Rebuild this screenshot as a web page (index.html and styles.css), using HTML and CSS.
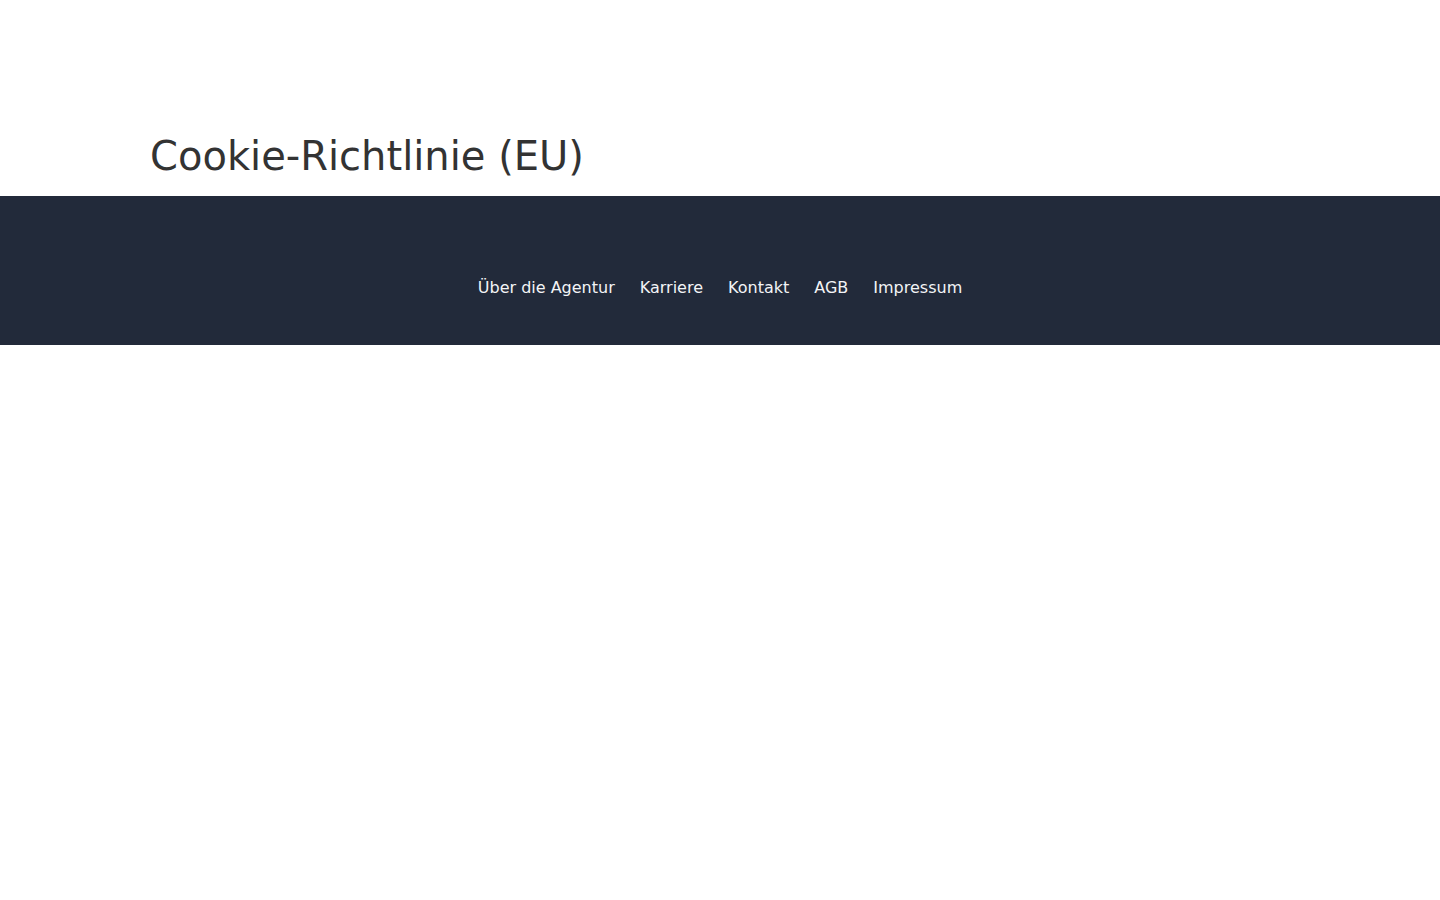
FILE: index.html
```html
<!DOCTYPE html>
<html lang="de">
<head>
    <meta charset="UTF-8">
    <title>Cookie-Richtlinie (EU)</title>
    <link rel="stylesheet" href="styles.css">
</head>
<body>

<div class="page-header">
    <h1 class="page-title">Cookie-Richtlinie (EU)</h1>
</div>

<!--Fußzeile-->
<div class="site-footer">
    <ul class="footer-nav">
        <li><a href="#">Über die Agentur</a></li>
        <li><a href="#">Karriere</a></li>
        <li><a href="#">Kontakt</a></li>
        <li><a href="#">AGB</a></li>
        <li><a href="#">Impressum</a></li>
    </ul>
</div>

</body>
</html>
```

FILE: styles.css
```css
* {
    padding: 0px;
    margin: 0px;
}

body {
    font-family: "DejaVu Sans", "Liberation Sans", sans-serif;
    background: #ffffff;
    color: #333333;
}

a {
    text-decoration: none;
    color: #f3f4f6;
}

.page-header {
    height: 196px;
    padding: 0px 150px;
    display: flex;
    align-items: flex-end;
    box-sizing: border-box;
}

.page-title {
    font-size: 40px;
    font-weight: normal;
    line-height: 48px;
    color: #333333;
    margin-bottom: 16px;
}

.site-footer {
    height: 149px;
    background: #222a3a;
    box-sizing: border-box;
    padding-top: 80px;
}

.footer-nav {
    list-style: none;
    display: flex;
    justify-content: center;
    gap: 25px;
    font-size: 16px;
    line-height: 24px;
}
```
